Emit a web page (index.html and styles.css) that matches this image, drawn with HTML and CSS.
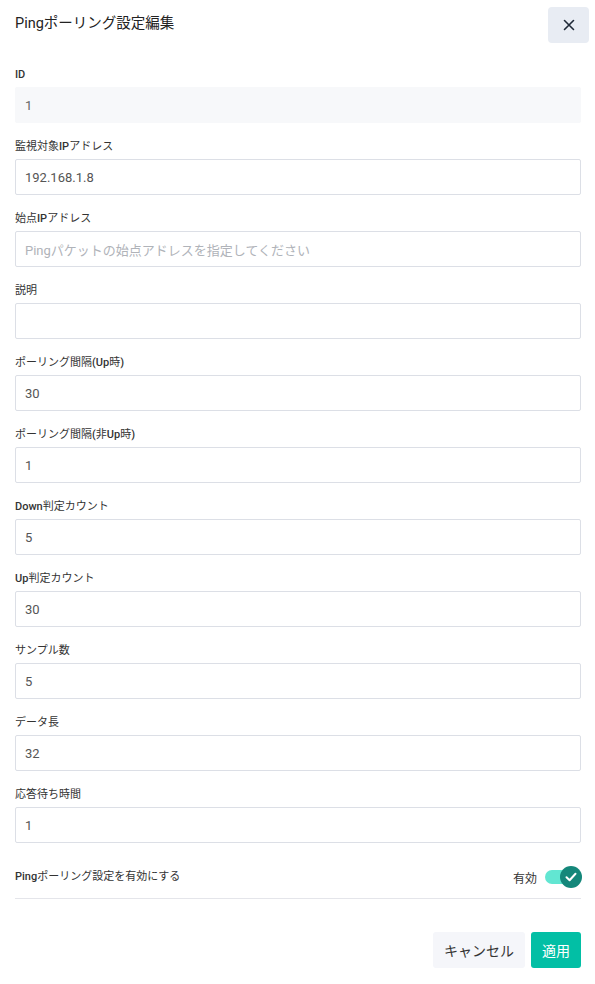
FILE: index.html
```html
<!DOCTYPE html>
<html lang="ja">
<head>
<meta charset="utf-8">
<link rel="stylesheet" href="styles.css">
</head>
<body>
<div class="dialog">
  <div class="header">
    <div class="title">Pingポーリング設定編集</div>
    <button class="close" aria-label="close">
      <svg width="12" height="12" viewBox="0 0 12 12"><path d="M1.5 1.5 L10.5 10.5 M10.5 1.5 L1.5 10.5" stroke="#1f2937" stroke-width="1.6" stroke-linecap="round"/></svg>
    </button>
  </div>
  <div class="body">
    <div class="field"><div class="label"><span class="lat">ID</span></div><div class="input readonly">1</div></div>
    <div class="field"><div class="label">監視対象<span class="lat">IP</span>アドレス</div><div class="input">192.168.1.8</div></div>
    <div class="field"><div class="label">始点<span class="lat">IP</span>アドレス</div><div class="input placeholder">Pingパケットの始点アドレスを指定してください</div></div>
    <div class="field"><div class="label">説明</div><div class="input"></div></div>
    <div class="field"><div class="label">ポーリング間隔<span class="lat">(Up</span>時<span class="lat">)</span></div><div class="input">30</div></div>
    <div class="field"><div class="label">ポーリング間隔<span class="lat">(</span>非<span class="lat">Up</span>時<span class="lat">)</span></div><div class="input">1</div></div>
    <div class="field"><div class="label"><span class="lat">Down</span>判定カウント</div><div class="input">5</div></div>
    <div class="field"><div class="label"><span class="lat">Up</span>判定カウント</div><div class="input">30</div></div>
    <div class="field"><div class="label">サンプル数</div><div class="input">5</div></div>
    <div class="field"><div class="label">データ長</div><div class="input">32</div></div>
    <div class="field"><div class="label">応答待ち時間</div><div class="input">1</div></div>
    <div class="toggle-row">
      <div class="label"><span class="lat">Ping</span>ポーリング設定を有効にする</div>
      <div class="toggle-wrap">
        <span class="toggle-text">有効</span>
        <span class="switch">
          <span class="knob">
            <svg width="14" height="14" viewBox="0 0 14 14"><path d="M2.5 7.3 L5.6 10.2 L11.5 3.8" fill="none" stroke="#fff" stroke-width="2" stroke-linecap="round" stroke-linejoin="round"/></svg>
          </span>
        </span>
      </div>
    </div>
  </div>
  <div class="footer">
    <button class="btn cancel">キャンセル</button>
    <button class="btn apply">適用</button>
  </div>
</div>
</body>
</html>
```
FILE: styles.css
```css
* { box-sizing: border-box; }
html, body { margin: 0; padding: 0; background: #fff; }
body {
  font-family: Roboto, "Noto Sans CJK JP", sans-serif;
  color: #333;
  width: 595px;
}
.dialog { padding: 0 14px 0 15px; }
.header {
  display: flex;
  justify-content: space-between;
  align-items: center;
  height: 48px;
  padding-top: 1px;
}
.title { font-size: 14.5px; color: #222; line-height: 20px; margin-top: -1px; }
.close {
  width: 41px; height: 36px;
  border: none; border-radius: 4px;
  background: #e8ecf3;
  display: flex; align-items: center; justify-content: center;
  margin-right: -8px;
  padding: 0;
}
.body { padding-top: 19px; }
.field { margin-bottom: 16px; }
.label {
  font-size: 11px;
  line-height: 16px;
  font-weight: 400;
  color: #333;
  margin-bottom: 4px;
}
.lat { font-weight: 500; }
.input {
  height: 36px;
  border: 1px solid #dcdfe6;
  border-radius: 2px;
  padding: 0 9px;
  font-size: 13px;
  color: #555;
  display: flex; align-items: center;
}
.input.readonly { background: #f7f8fa; border-color: #f7f8fa; color: #666; }
.input.placeholder { color: #b0b3b9; font-size: 13px; }
.toggle-row {
  display: flex;
  justify-content: space-between;
  align-items: center;
  height: 40px;
  border-bottom: 1px solid #e4e5ea;
  margin-top: 10px;
  padding-bottom: 3px;
}
.toggle-row .label { margin: 0; font-size: 11px; }
.toggle-wrap { display: flex; align-items: center; gap: 8px; }
.toggle-text { font-size: 12px; color: #333; }
.switch {
  position: relative;
  width: 36px; height: 14px;
  background: #62e6d2;
  border-radius: 7px;
}
.knob {
  position: absolute;
  right: -1px; top: -4px;
  width: 22px; height: 22px;
  border-radius: 50%;
  background: #14877a;
  display: flex; align-items: center; justify-content: center;
}
.footer {
  display: flex;
  justify-content: flex-end;
  gap: 6px;
  padding-top: 33px;
}
.btn {
  height: 36px;
  border: none;
  border-radius: 3px;
  font-family: Roboto, "Noto Sans CJK JP", sans-serif;
  font-size: 14px;
  padding: 0;
}
.cancel { width: 92px; background: #f5f6fa; color: #333; }
.apply { width: 50px; background: #02bfa5; color: #fff; }
```
